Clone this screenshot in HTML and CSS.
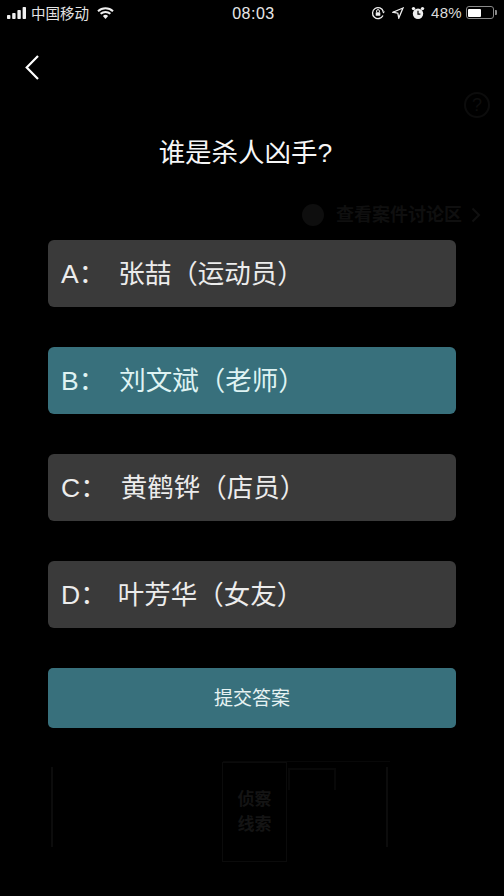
FILE: index.html
```html
<!DOCTYPE html>
<html lang="zh-CN">
<head>
<meta charset="utf-8">
<title>谁是杀人凶手</title>
<link rel="stylesheet" href="styles.css">
</head>
<body>
<div class="screen">
  <div class="ghost-help">?</div>
  <div class="ghost-link"><span class="ghost-dot"></span>查看案件讨论区<svg width="10" height="16" viewBox="0 0 10 16"><path d="M1.500 1.500 8 8l-6.500 6.500"/></svg></div>
  <div class="ghost-frame"></div>
  <div class="ghost-tab"></div>
  <div class="ghost-card"><span>侦察<br>线索</span></div>
  <div class="ghost-rail ghost-rail-left"></div>
  <div class="ghost-rail ghost-rail-right"></div>

  <header class="status">
    <div class="status-left">
      <svg class="signal" width="20" height="12" viewBox="0 0 20 12"><rect x="0" y="8" width="3.400" height="4" rx=".8"/><rect x="5.200" y="6" width="3.400" height="6" rx=".8"/><rect x="10.400" y="3" width="3.400" height="9" rx=".8"/><rect x="15.600" y="0" width="3.400" height="12" rx=".8"/></svg>
      <span class="carrier">中国移动</span>
      <svg class="wifi" width="17" height="12" viewBox="0 0 17 12"><path d="M8.500 12 5.900 8.900a4 4 0 0 1 5.200 0Z"/><path d="M1 4.200a11 11 0 0 1 15 0" class="arc"/><path d="M3.600 6.800a7.400 7.400 0 0 1 9.800 0" class="arc"/></svg>
    </div>
    <div class="clock">08:03</div>
    <div class="status-right">
      <svg width="14" height="14" viewBox="0 0 14 14"><path class="line" d="M12 9.500A5.500 5.500 0 1 1 12.300 5.500"/><path d="M11 5.500h3l-1.500 2Z"/><rect x="4.700" y="6.200" width="4.600" height="3.600" rx=".6"/><path class="line thin" d="M5.600 6.200V5a1.400 1.400 0 0 1 2.800 0v1.200"/></svg>
      <svg width="12" height="12" viewBox="0 0 12 12"><path class="line" d="M11 1 1 5.200l4.800 1 1 4.800Z"/></svg>
      <svg width="14" height="14" viewBox="0 0 14 14"><circle cx="7" cy="7.800" r="5.200"/><circle cx="2.500" cy="2.600" r="1.700"/><circle cx="11.500" cy="2.600" r="1.700"/><path class="hand" d="M7 4.800v3.400h2.400"/></svg>
      <span class="percent">48%</span>
      <div class="battery"><div class="battery-level"></div></div>
      <div class="battery-cap"></div>
    </div>
  </header>

  <nav class="nav">
    <svg width="14" height="25" viewBox="0 0 14 25"><path class="back" d="M13 1 1.700 12.500 13 24"/></svg>
  </nav>

  <main class="quiz">
    <h1 class="question">谁是杀人凶手?</h1>
    <ul class="options">
      <li class="option"><span class="letter letter-a">A：</span>张喆（运动员）</li>
      <li class="option selected"><span class="letter">B：</span>刘文斌（老师）</li>
      <li class="option"><span class="letter">C：</span>黄鹤铧（店员）</li>
      <li class="option"><span class="letter letter-d">D：</span>叶芳华（女友）</li>
    </ul>
    <button class="submit" type="button">提交答案</button>
  </main>
</div>
</body>
</html>
```
FILE: styles.css
```css
* { box-sizing: border-box; }
html, body { margin: 0; padding: 0; background: #000; }
body { font-family: "Liberation Sans", "Noto Sans CJK SC", sans-serif; color: #fff; }
.screen { position: relative; width: 504px; height: 896px; overflow: hidden; background: #000; }

.status { position: relative; height: 26px; display: flex; align-items: center; justify-content: space-between; padding: 0 7px 1px 7px; font-size: 14px; color: #f0f0f0; }
.status svg { fill: #f0f0f0; display: block; }
.status-left { display: flex; align-items: center; width: 180px; }
.carrier { margin-left: 4px; font-size: 14.500px; color: #e4e4e4; }
.wifi { margin-left: 8px; }
.arc { fill: none; stroke: #f0f0f0; stroke-width: 2; }
.clock { font-size: 16px; letter-spacing: .5px; margin-left: 3px; padding-top: 3px; color: #e8e8e8; }
.status-right { display: flex; align-items: center; justify-content: flex-end; width: 180px; gap: 7px; }
.status .line { fill: none; stroke: #f0f0f0; stroke-width: 1.300; }
.status .thin { stroke-width: 1; }
.status .hand { fill: none; stroke: #000; stroke-width: 1.200; }
.percent { font-size: 15px; letter-spacing: .3px; margin-left: -1px; color: #dcdcdc; }
.battery { width: 28px; height: 13px; border: 1px solid #8a8a8a; border-radius: 3px; padding: 1.500px; margin-left: -3px; }
.battery-level { width: 13px; height: 100%; background: #fff; border-radius: 1px; }
.battery-cap { width: 2px; height: 5px; background: #8a8a8a; margin-left: -6px; border-radius: 0 1px 1px 0; }

.nav { position: relative; height: 50px; padding: 29px 0 0 25px; }
.nav svg { display: block; }
.back { fill: none; stroke: #fff; stroke-width: 2.200; }

.quiz { position: relative; display: flex; flex-direction: column; align-items: center; }
.question { margin: 59px 0 69px; padding-right: 13px; height: 36px; line-height: 36px; font-size: 26.500px; font-weight: 400; color: #f6f6f6; }
.options { list-style: none; margin: 0; padding: 0; width: 408px; display: flex; flex-direction: column; gap: 40px; }
.option { height: 67px; padding: 0 0 4px 13px; display: flex; align-items: center; border-radius: 6px; background: #3a3a3a; font-size: 26.500px; color: #ececec; }
.selected { background: #38707c; color: #dff3f3; }
.letter { margin-right: 14px; white-space: pre; }
.letter-a { margin-right: 13px; }
.letter-d { margin-right: 11px; }
.submit { margin-top: 40px; width: 408px; height: 60px; border: 0; border-radius: 5px; background: #38707c; color: #e6f2f2; font-family: inherit; font-size: 19px; padding: 0 0 4px; }

.ghost-help { position: absolute; left: 464px; top: 92px; width: 26px; height: 26px; border: 2px solid #0c0c0c; border-radius: 50%; color: #0e0e0e; font-size: 18px; line-height: 22px; text-align: center; }
.ghost-link { position: absolute; left: 302px; top: 204px; display: flex; align-items: center; gap: 12px; font-size: 18px; font-weight: 700; line-height: 22px; color: #0f0f0f; white-space: nowrap; }
.ghost-link svg { fill: none; stroke: #101010; stroke-width: 2; margin-left: -3px; }
.ghost-dot { width: 22px; height: 22px; border-radius: 50%; background: #0e0e0e; }
.ghost-frame { position: absolute; left: 223px; top: 761px; width: 167px; height: 1px; background: #080808; }
.ghost-tab { position: absolute; left: 288px; top: 768px; width: 48px; height: 22px; border: 2px solid #080808; border-bottom: 0; }
.ghost-card { position: absolute; left: 222px; top: 762px; width: 65px; height: 100px; border: 1px solid #0b0b0b; display: flex; align-items: center; justify-content: center; color: #141414; font-size: 17px; font-weight: 700; line-height: 25px; text-align: center; }
.ghost-rail { position: absolute; top: 767px; width: 2px; height: 80px; background: #0c0c0c; }
.ghost-rail-left { left: 51px; }
.ghost-rail-right { left: 386px; }
```
